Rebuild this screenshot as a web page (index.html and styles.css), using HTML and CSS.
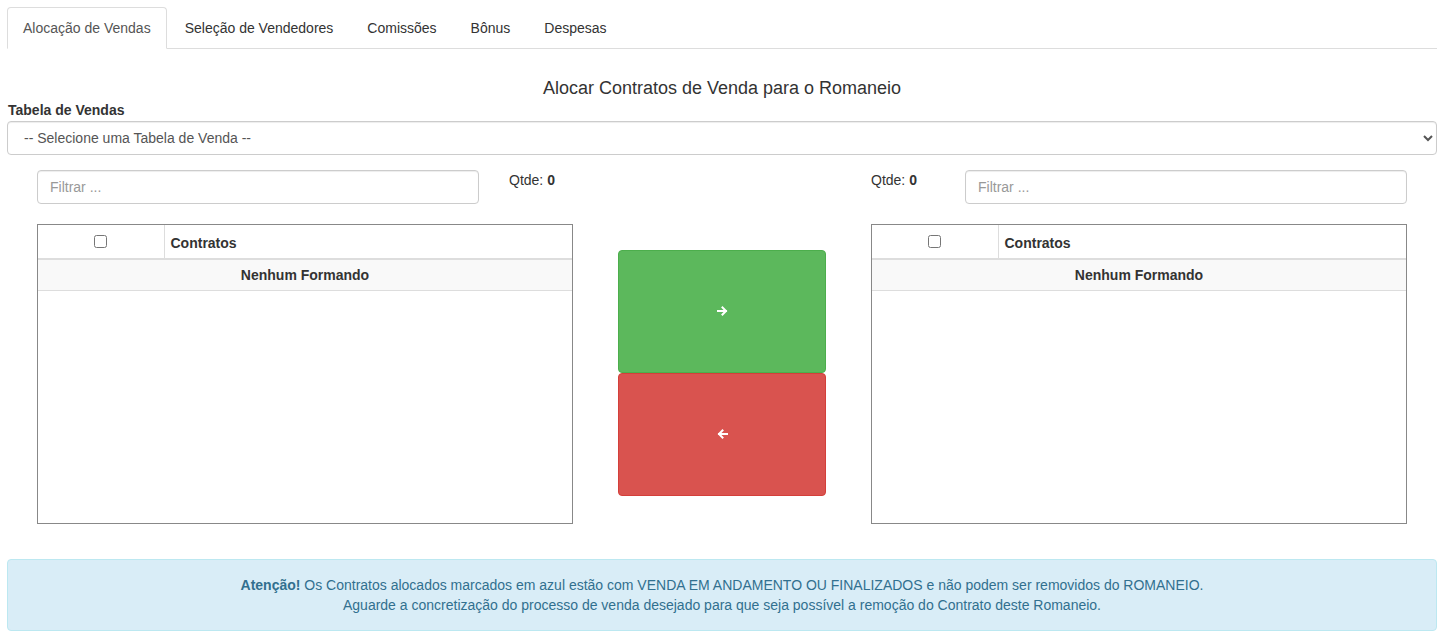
FILE: index.html
```html
<!DOCTYPE html>
<html lang="pt-BR">
<head>
<meta charset="utf-8">
<title>Alocação de Vendas</title>
<link rel="stylesheet" href="styles.css">
</head>
<body>
<div class="page">
  <ul class="tabs">
    <li class="tab active"><a href="#">Alocação de Vendas</a></li>
    <li class="tab"><a href="#">Seleção de Vendedores</a></li>
    <li class="tab"><a href="#">Comissões</a></li>
    <li class="tab"><a href="#">Bônus</a></li>
    <li class="tab"><a href="#">Despesas</a></li>
  </ul>

  <h4 class="title">Alocar Contratos de Venda para o Romaneio</h4>

  <label class="field-label" for="tabela">Tabela de Vendas</label>
  <select id="tabela" class="form-control select">
    <option>-- Selecione uma Tabela de Venda --</option>
  </select>

  <div class="transfer">
    <div class="toolbar toolbar-left">
      <input class="form-control filter" type="text" placeholder="Filtrar ...">
      <span class="qtde">Qtde: <b>0</b></span>
    </div>
    <div class="toolbar-mid"></div>
    <div class="toolbar toolbar-right">
      <span class="qtde">Qtde: <b>0</b></span>
      <input class="form-control filter" type="text" placeholder="Filtrar ...">
    </div>

    <div class="list-box">
      <table class="list">
        <thead>
          <tr><th class="check-col"><input type="checkbox" class="check"></th><th class="name-col">Contratos</th></tr>
        </thead>
        <tbody>
          <tr class="empty"><td colspan="2">Nenhum Formando</td></tr>
        </tbody>
      </table>
    </div>

    <div class="actions">
      <button class="btn btn-success" type="button" aria-label="Adicionar">
        <svg class="btn-icon" width="11" height="10" viewBox="0 0 11 10"><path d="M1 5H9M5.5 1.5L9 5L5.5 8.5" stroke="#fff" stroke-width="2" fill="none" stroke-linecap="square"/></svg>
      </button>
      <button class="btn btn-danger" type="button" aria-label="Remover">
        <svg class="btn-icon" width="11" height="10" viewBox="0 0 11 10"><path d="M10 5H2M5.5 1.5L2 5L5.5 8.5" stroke="#fff" stroke-width="2" fill="none" stroke-linecap="square"/></svg>
      </button>
    </div>

    <div class="list-box">
      <table class="list">
        <thead>
          <tr><th class="check-col"><input type="checkbox" class="check"></th><th class="name-col">Contratos</th></tr>
        </thead>
        <tbody>
          <tr class="empty"><td colspan="2">Nenhum Formando</td></tr>
        </tbody>
      </table>
    </div>
  </div>

  <div class="alert">
    <strong>Atenção!</strong> Os Contratos alocados marcados em azul estão com VENDA EM ANDAMENTO OU FINALIZADOS e não podem ser removidos do ROMANEIO.<br>
    Aguarde a concretização do processo de venda desejado para que seja possível a remoção do Contrato deste Romaneio.
  </div>
</div>
</body>
</html>
```

FILE: styles.css
```css
* { box-sizing: border-box; }

html, body {
  margin: 0;
  padding: 0;
}

body {
  font-family: "Liberation Sans", Arial, Helvetica, sans-serif;
  font-size: 14px;
  line-height: 20px;
  color: #333;
  background: #fff;
  overflow: hidden;
}

.page {
  padding: 7px 9px 0 7px;
}

/* Tabs */
.tabs {
  list-style: none;
  margin: 0;
  padding: 0;
  display: flex;
  border-bottom: 1px solid #ddd;
}

.tab {
  margin-right: 2px;
  margin-bottom: -1px;
}

.tab a {
  display: block;
  padding: 10px 15px;
  line-height: 20px;
  border: 1px solid transparent;
  border-radius: 4px 4px 0 0;
  color: #333;
  text-decoration: none;
}

.tab.active a {
  color: #555;
  background: #fff;
  border-color: #ddd #ddd transparent;
}

/* Title */
.title {
  margin: 29px 0 2px;
  font-size: 18px;
  font-weight: 500;
  line-height: 20px;
  text-align: center;
  color: #333;
}

.field-label {
  display: block;
  padding-left: 1px;
  font-weight: bold;
  margin-bottom: 1px;
}

.form-control {
  display: block;
  width: 100%;
  height: 34px;
  padding: 6px 12px;
  font-family: inherit;
  font-size: 14px;
  line-height: 20px;
  color: #555;
  background: #fff;
  border: 1px solid #ccc;
  border-radius: 4px;
  box-shadow: inset 0 1px 1px rgba(0, 0, 0, .075);
}

.form-control::placeholder { color: #999; }

.select {
  margin-bottom: 15px;
}

/* Transfer area */
.transfer {
  display: grid;
  grid-template-columns: 536px 1fr 536px;
  row-gap: 20px;
  padding: 0 30px;
}

.toolbar {
  display: flex;
  align-items: flex-start;
}

.toolbar .filter {
  width: 442px;
}

.toolbar-left .qtde { margin-left: 30px; }

.toolbar-right { justify-content: space-between; }

.qtde b { font-weight: bold; }

.list-box {
  height: 300px;
  border: 1px solid #888;
  background: #fff;
}

.list {
  width: 100%;
  border-collapse: collapse;
}

.list th {
  height: 34px;
  padding: 2px 6px 0;
  font-weight: bold;
  text-align: left;
  vertical-align: middle;
  border-bottom: 2px solid #ddd;
}

.list .check-col {
  width: 126px;
  text-align: center;
  border-right: 1px solid #ddd;
}

.check {
  width: 13px;
  height: 13px;
  margin: 0 0 4px;
  vertical-align: middle;
}

.list td {
  height: 31px;
  padding: 5px;
  text-align: center;
  font-weight: bold;
  background: #f9f9f9;
  border-bottom: 1px solid #ddd;
}

.actions {
  align-self: start;
  margin-top: 26px;
  display: flex;
  flex-direction: column;
  padding: 0 45px;
}

.btn {
  display: flex;
  align-items: center;
  justify-content: center;
  width: 100%;
  height: 123px;
  padding: 0;
  border: 1px solid transparent;
  border-radius: 4px;
  cursor: pointer;
}

.btn-icon {
  margin-bottom: 2px;
}

.btn-success {
  background: #5cb85c;
  border-color: #4cae4c;
}

.btn-danger {
  background: #d9534f;
  border-color: #d43f3a;
}

/* Alert */
.alert {
  margin-top: 35px;
  padding: 15px;
  text-align: center;
  color: #31708f;
  background: #d9edf7;
  border: 1px solid #bce8f1;
  border-radius: 4px;
}
```
